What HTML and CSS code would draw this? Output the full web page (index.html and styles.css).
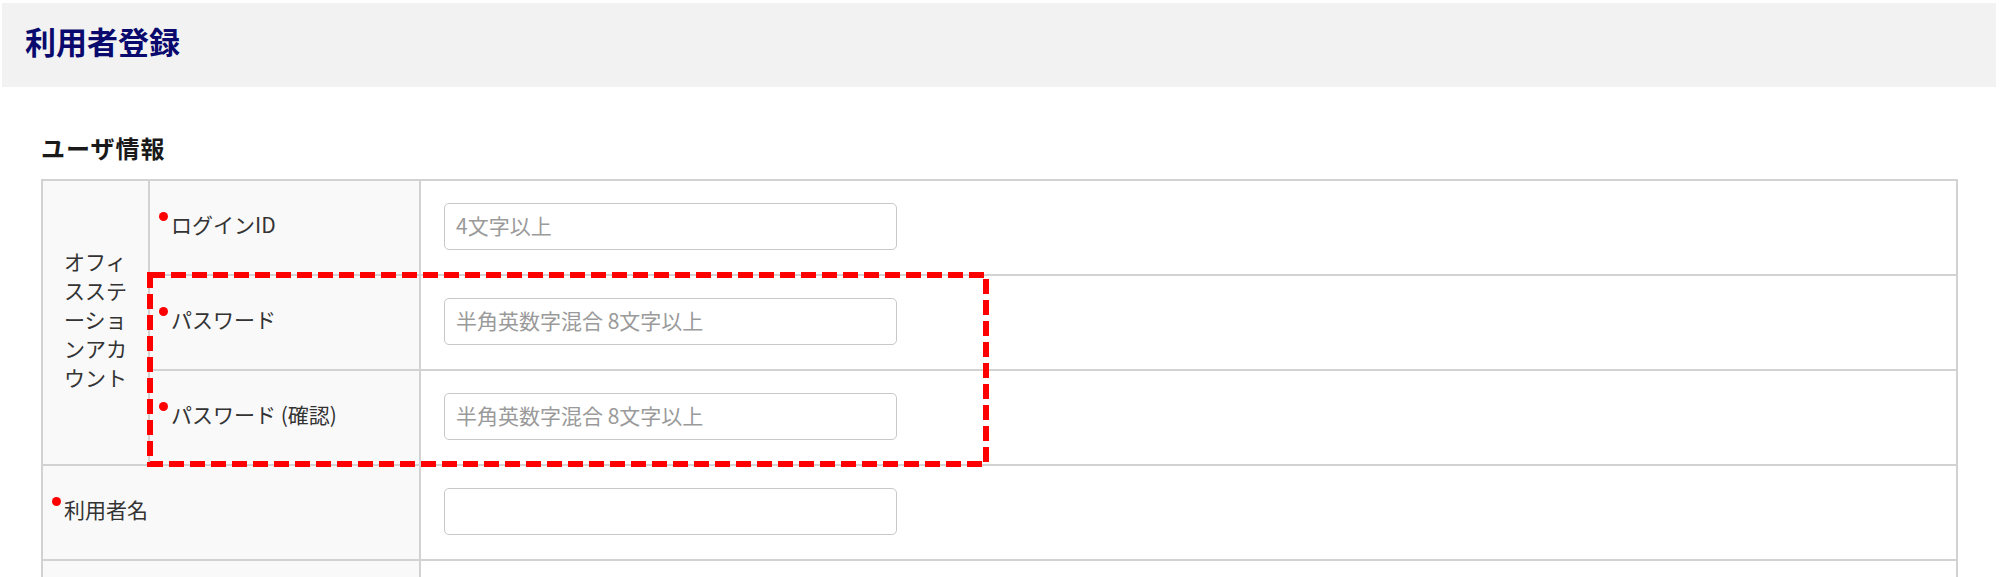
FILE: index.html
```html
<!DOCTYPE html>
<html lang="ja">
<head>
<meta charset="utf-8">
<title>利用者登録</title>
<link rel="stylesheet" href="styles.css">
</head>
<body>
<header class="page-header">
  <h1 class="page-title">利用者登録</h1>
</header>
<main class="content">
  <h2 class="section-title">ユーザ情報</h2>
  <div class="form-wrap">
    <table class="form-table">
      <colgroup>
        <col class="c1">
        <col class="c2">
        <col class="c3">
      </colgroup>
      <tbody>
        <tr>
          <th class="group" rowspan="3"><span class="group-text">オフィスステーションアカウント</span></th>
          <th class="label"><span class="label-text"><span class="req"></span>ログインID</span></th>
          <td class="field"><input class="text-input" type="text" placeholder="4文字以上"></td>
        </tr>
        <tr>
          <th class="label"><span class="label-text"><span class="req"></span>パスワード</span></th>
          <td class="field"><input class="text-input" type="password" placeholder="半角英数字混合 8文字以上"></td>
        </tr>
        <tr>
          <th class="label"><span class="label-text"><span class="req"></span>パスワード (確認)</span></th>
          <td class="field"><input class="text-input" type="password" placeholder="半角英数字混合 8文字以上"></td>
        </tr>
        <tr>
          <th class="label" colspan="2"><span class="label-text"><span class="req"></span>利用者名</span></th>
          <td class="field"><input class="text-input" type="text"></td>
        </tr>
        <tr>
          <th class="label" colspan="2"></th>
          <td class="field"><input class="text-input" type="text"></td>
        </tr>
      </tbody>
    </table>
    <svg class="highlight" width="842" height="195" viewBox="0 0 842 195" aria-hidden="true">
      <rect x="3" y="3" width="836" height="189" fill="none" stroke="#ff0000" stroke-width="6" stroke-dasharray="15 6"/>
    </svg>
  </div>
</main>
</body>
</html>
```
FILE: styles.css
```css
html, body {
  margin: 0;
  padding: 0;
  background: #ffffff;
}

body {
  font-family: "Noto Sans CJK JP", "Noto Sans", sans-serif;
  color: #333333;
}

.page-header {
  margin: 3px 4px 0 2px;
  height: 84px;
  background: #f2f2f2;
  display: flex;
  align-items: center;
  padding-left: 23px;
  box-sizing: border-box;
}

.page-title {
  margin: 0 0 9px 0;
  font-size: 31px;
  line-height: 40px;
  font-weight: 700;
  color: #0a0a6e;
}

.content {
  padding: 0 42px 0 41px;
}

.section-title {
  margin: 45px 0 15px 0;
  font-size: 24px;
  line-height: 32px;
  font-weight: 700;
  color: #1a1a1a;
  letter-spacing: 1px;
}

.form-wrap {
  position: relative;
}

.form-table {
  width: 100%;
  border-collapse: collapse;
  table-layout: fixed;
  border: 2px solid #d2d2d2;
}

.c1 { width: 107px; }
.c2 { width: 271px; }

.form-table th,
.form-table td {
  border: 2px solid #d2d2d2;
  height: 93px;
  padding: 0;
  font-weight: 400;
  font-size: 21px;
  line-height: 30px;
  color: #333333;
  text-align: left;
  vertical-align: middle;
}

.form-table th {
  background: #f9f9f9;
}

.form-table .group {
  padding: 0 15px 0 21px;
}

.group-text {
  display: block;
  margin-bottom: 6px;
  line-height: 29px;
  line-break: anywhere;
  word-break: break-all;
}

.form-table .label {
  padding: 0 0 0 9px;
}

.label-text {
  display: block;
  margin-bottom: 7px;
}

.req {
  display: inline-block;
  width: 9px;
  height: 9px;
  border-radius: 50%;
  background: #ff0000;
  vertical-align: top;
  margin: 3px 3px 0 0;
}

.form-table .field {
  background: #ffffff;
  padding: 0 0 0 23px;
}

.text-input {
  display: block;
  width: 453px;
  height: 47px;
  margin-bottom: 2px;
  box-sizing: border-box;
  border: 1.5px solid #c8c8c8;
  border-radius: 5px;
  padding: 0 11px 4px 11px;
  font-family: "Noto Sans CJK JP", "Noto Sans", sans-serif;
  font-size: 21px;
  color: #333333;
  background: #ffffff;
  outline: none;
}

.text-input::placeholder {
  color: #9a9a9a;
}

.highlight {
  position: absolute;
  left: 106px;
  top: 93px;
  pointer-events: none;
}
```
